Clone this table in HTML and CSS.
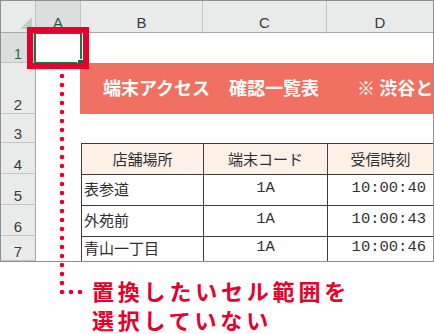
FILE: index.html
```html
<!DOCTYPE html>
<html lang="ja">
<head>
<meta charset="utf-8">
<link rel="stylesheet" href="styles.css">
</head>
<body>
<div class="page">
  <div class="sheet">
    <div class="corner"><span class="tri"></span></div>
    <div class="ch sel">A</div><div class="ch">B</div><div class="ch">C</div><div class="ch last">D</div>

    <div class="rh sel">1</div><div class="cell"></div><div class="cell"></div><div class="cell"></div><div class="cell"></div>

    <div class="rh">2</div><div class="cell"></div>
    <div class="band"><span>端末アクセス</span><span class="sp1">確認一覧表</span><span class="sp2">※ 渋谷と</span></div>

    <div class="rh">3</div><div class="cell"></div><div class="cell"></div><div class="cell"></div><div class="cell"></div>

    <div class="rh">4</div><div class="cell"></div>
    <div class="th">店舗場所</div><div class="th">端末コード</div><div class="th">受信時刻</div>

    <div class="rh">5</div><div class="cell"></div>
    <div class="td">表参道</div><div class="td num c">1A</div><div class="td num r">10:00:40</div>

    <div class="rh">6</div><div class="cell"></div>
    <div class="td">外苑前</div><div class="td num c">1A</div><div class="td num r">10:00:43</div>

    <div class="rh">7</div><div class="cell"></div>
    <div class="td">青山一丁目</div><div class="td num c">1A</div><div class="td num r">10:00:46</div>
  </div>

  <p class="callout">置換したいセル範囲を<br>選択していない</p>

  <div class="selection"><span class="handle"></span></div>
  <div class="redbox"></div>
  <svg class="dots" width="100" height="310" viewBox="0 0 100 310">
    <polyline points="62,76 62,292 84,292" fill="none" stroke="#e5002d" stroke-width="4.6" stroke-linecap="round" stroke-dasharray="0 9"/>
  </svg>
</div>
</body>
</html>
```

FILE: styles.css
```css
html, body {
  margin: 0;
  padding: 0;
  background: #ffffff;
}

.page {
  position: relative;
  width: 434px;
  height: 334px;
  overflow: hidden;
  font-family: "Liberation Sans", "Noto Sans CJK JP", sans-serif;
}

.sheet {
  display: grid;
  grid-template-columns: 35px 45px 122px 124px 1fr;
  grid-template-rows: 32px 30px 51px 29px 31px 31px 31px 25px;
  width: 434px;
  box-sizing: border-box;
  border: 1px solid #8f8f8f;
  background: #ffffff;
}

.corner {
  background: #e9ebea;
  border-right: 1px solid #c4c4c4;
  border-bottom: 1px solid #a9a9a9;
  display: flex;
  justify-content: flex-end;
  align-items: flex-end;
  padding: 0 3px 3px 0;
}

.tri {
  width: 12px;
  height: 12px;
  background: #c7c9c8;
  clip-path: polygon(100% 0, 100% 100%, 0 100%);
}

.ch {
  background: #e9ebea;
  border-right: 1px solid #c4c4c4;
  border-bottom: 1px solid #a9a9a9;
  display: flex;
  justify-content: center;
  align-items: flex-end;
  padding-bottom: 2px;
  font-size: 15px;
  line-height: 15px;
  color: #3a3a3a;
}

.ch.last {
  border-right: none;
}

.ch.sel {
  background: #dcdedd;
  color: #1f5c3e;
}

.rh {
  background: #e9ebea;
  border-right: 1px solid #a9a9a9;
  border-bottom: 1px solid #c4c4c4;
  display: flex;
  justify-content: center;
  align-items: flex-end;
  padding-bottom: 1px;
  font-size: 15px;
  line-height: 15px;
  color: #3a3a3a;
}

.rh.sel {
  background: #dcdedd;
  color: #217346;
}

.cell {
  background: #ffffff;
}

.band {
  grid-column: 3 / 6;
  background: #f07162;
  color: #ffffff;
  font-family: "Noto Sans CJK JP", sans-serif;
  font-weight: 700;
  font-size: 18px;
  line-height: 18px;
  white-space: nowrap;
  overflow: hidden;
  display: flex;
  align-items: center;
  padding: 1px 0 5px 23px;
  margin-left: -1px;
}

.band .sp1 {
  margin-left: 19px;
}

.band .sp2 {
  margin-left: 38px;
}

.th, .td {
  border-left: 1px solid #3d3d3d;
  border-top: 1px solid #3d3d3d;
  font-family: "Noto Sans CJK JP", sans-serif;
  font-size: 15px;
  line-height: 15px;
  color: #2e2e2e;
  display: flex;
  align-items: center;
  white-space: nowrap;
  overflow: hidden;
}

.th {
  background: #fcf0e7;
  justify-content: center;
  padding-bottom: 1px;
}

.td {
  padding: 0 0 3px 2px;
}

.td.num {
  font-family: "Liberation Mono", monospace;
  font-size: 15.5px;
  color: #333333;
}

.td.c {
  justify-content: center;
  padding-left: 0;
}

.td.r {
  justify-content: flex-end;
  padding-right: 7px;
}

.callout {
  margin: 14px 0 0 92px;
  font-family: "Noto Sans CJK JP", sans-serif;
  font-weight: 700;
  font-size: 22px;
  line-height: 29px;
  letter-spacing: 3.8px;
  color: #e5002d;
}

.selection {
  position: absolute;
  left: 34px;
  top: 32px;
  width: 48px;
  height: 32px;
  box-sizing: border-box;
  border: 2px solid #217346;
}

.handle {
  position: absolute;
  right: -4px;
  bottom: -4px;
  width: 5px;
  height: 5px;
  background: #1f5a3c;
  border: 1px solid #ffffff;
}

.redbox {
  position: absolute;
  left: 27px;
  top: 27px;
  width: 62px;
  height: 42px;
  box-sizing: border-box;
  border: 6px solid #e5002d;
}

.dots {
  position: absolute;
  left: 0;
  top: 0;
}
```
